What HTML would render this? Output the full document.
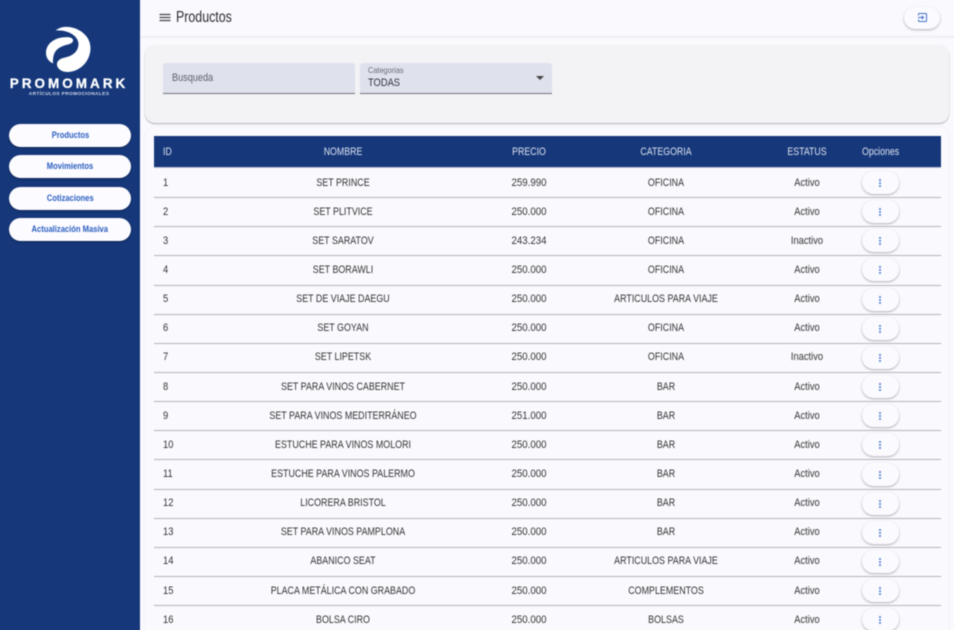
<!DOCTYPE html>
<html lang="es">
<head>
<meta charset="utf-8">
<title>Productos</title>
<style>
html,body{margin:0;padding:0;width:954px;height:630px;overflow:hidden;background:#faf9fe;}
*{box-sizing:border-box;}
body{font-family:"Liberation Sans",sans-serif;color:#333;position:relative;}
#wrap{position:absolute;left:-10px;top:-10px;width:974px;height:650px;overflow:hidden;filter:blur(.4px);background:#faf9fe;}
#in{position:absolute;left:10px;top:10px;width:954px;height:630px;}
.a{position:absolute;white-space:nowrap;}
.side{left:-10px;top:-10px;width:150px;height:650px;background:#16387b;}
.nav{left:9px;width:122px;height:23px;border-radius:12px;background:#fcfbff;color:#2a5fc0;font-weight:bold;font-size:9.500px;line-height:23.500px;text-align:center;box-shadow:0 1px 2px rgba(0,0,0,.35);}
.nav span{display:inline-block;transform:scaleX(.8);}
.topbar{left:140px;top:-10px;width:824px;height:46px;background:#faf9fe;box-shadow:0 1px 2px rgba(0,0,0,.08);}
.panel{left:145px;top:45px;width:804px;height:78px;background:#f3f3f6;border-radius:10px;box-shadow:0 1px 1.500px rgba(0,0,0,.3);}
.card{left:145px;top:127px;width:804px;height:520px;background:#faf9fe;border-radius:10px;box-shadow:0 0 2px rgba(0,0,0,.06);}
.field{top:63px;height:31px;background:#dfe1ec;border-bottom:1px solid #74757d;border-radius:3px 3px 0 0;}
.head{left:154px;top:136px;width:787px;height:32px;background:#16387b;border-bottom:1px solid #b9c0d2;}
.th{top:146px;color:#dde2ee;font-size:11px;line-height:13px;}
.thc{transform:translateX(-50%) scaleX(.8);}
.thl{transform:scaleX(.8);transform-origin:0 50%;}
.td{font-size:11px;line-height:13px;color:#333;margin-top:.6px;}
.i{left:163px;transform:scaleX(.85);transform-origin:0 50%;}
.n{left:343px;transform:translateX(-50%) scaleX(.81);}
.p{left:529px;transform:translateX(-50%) scaleX(.88);}
.k{left:666px;transform:translateX(-50%) scaleX(.81);}
.e{left:807px;transform:translateX(-50%) scaleX(.85);}
.line{left:154px;width:787px;height:1px;background:#b5b5b8;}
.btn{left:862px;width:37px;height:23px;border-radius:11.500px;background:#fbfaff;box-shadow:0 1px 2px rgba(0,0,0,.3);}
.dots{left:879px;width:2px;height:8px;background:radial-gradient(circle at 1px 1px,#5b85d0 1px,transparent 1.1px) 0 0/2px 3px;}
</style>
</head>
<body>
<div id="wrap"><div id="in">
<div class="a side"></div>
<svg class="a" style="left:40px;top:22px" width="58" height="56" viewBox="40 22 58 56">
<path fill="#fff" d="M55.500 30.500C60 27 65 26.500 69 27C81 28.500 90.500 37 90.500 48C90.500 62 79 72 67.500 72C62 72 57.500 69 57 65C56.500 61 60 58.500 65 57.500C73 56 78.500 51 78.500 44C78.500 36 68 29.500 55.500 30.500Z"/>
<path fill="#fff" d="M46 53C46 44 54 38.500 62 37.500C67 36.800 72.500 37 73 40C73.500 43 70 44 66 45C59 47 55 50 53.500 56C53 58.500 52.800 61 53 63.500C49 61.500 46 58 46 53Z"/>
</svg>
<div class="a" style="left:8px;top:76px;width:122px;text-align:center;color:#fff;font-weight:bold;font-size:13.500px;letter-spacing:3px;line-height:15px;-webkit-text-stroke:.25px #fff;">PROMOMARK</div>
<div class="a" style="left:10px;top:91.500px;width:118px;text-align:center;color:#d5dbea;font-weight:bold;font-size:4.800px;letter-spacing:.36px;line-height:6px;">ARTÍCULOS PROMOCIONALES</div>

<div class="a nav" style="top:123.500px"><span>Productos</span></div>
<div class="a nav" style="top:155px"><span>Movimientos</span></div>
<div class="a nav" style="top:186.500px"><span>Cotizaciones</span></div>
<div class="a nav" style="top:218px"><span>Actualización Masiva</span></div>

<div class="a topbar"></div>
<svg class="a" style="left:158px;top:11px" width="14" height="12" viewBox="0 0 14 12"><path d="M1.500 3.500h11M1.500 6.500h11M1.500 9.500h11" stroke="#444" stroke-width="1.200" fill="none"/></svg>
<div class="a" style="left:176px;top:8.500px;font-size:15.500px;line-height:18px;color:#2c2c30;transform:scaleX(.8);transform-origin:0 50%;">Productos</div>
<div class="a" style="left:904px;top:7px;width:36px;height:21.500px;border-radius:11px;background:#fbfaff;box-shadow:0 1px 2px rgba(0,0,0,.3);"></div>
<svg class="a" style="left:918px;top:13px" width="9" height="9" viewBox="0 0 9 9"><path d="M.5 2.500V1.200Q.5.500 1.200.500H7.800Q8.500.500 8.500 1.200V7.800Q8.500 8.500 7.800 8.500H1.200Q.5 8.500.5 7.800V6.500" stroke="#3f6fc6" stroke-width="1" fill="none"/><path d="M0 4.500H5.500M3.800 2.800L5.500 4.500L3.800 6.200" stroke="#3f6fc6" stroke-width="1" fill="none"/></svg>

<div class="a panel"></div>
<div class="a field" style="left:163px;width:192px;"></div>
<div class="a" style="left:172px;top:72px;font-size:11px;line-height:13px;color:#5f6069;transform:scaleX(.83);transform-origin:0 50%;">Busqueda</div>
<div class="a field" style="left:360px;width:192px;"></div>
<div class="a" style="left:368px;top:65.500px;font-size:8px;line-height:9px;color:#6b6c75;transform:scaleX(.92);transform-origin:0 50%;">Categorias</div>
<div class="a" style="left:368px;top:76.500px;font-size:11px;line-height:13px;color:#33343a;transform:scaleX(.85);transform-origin:0 50%;">TODAS</div>
<svg class="a" style="left:536px;top:76px" width="8" height="5" viewBox="0 0 8 5"><path d="M0 0H8L4 4Z" fill="#444"/></svg>

<div class="a card"></div>
<div class="a head"></div>
<div class="a th thl" style="left:163px">ID</div>
<div class="a th thc" style="left:343px">NOMBRE</div>
<div class="a th thc" style="left:529px">PRECIO</div>
<div class="a th thc" style="left:666px">CATEGORIA</div>
<div class="a th thc" style="left:807px">ESTATUS</div>
<div class="a th thl" style="left:862px">Opciones</div>

<!-- rows -->
<div class="a td i" style="top:176px">1</div><div class="a td n" style="top:176px">SET PRINCE</div><div class="a td p" style="top:176px">259.990</div><div class="a td k" style="top:176px">OFICINA</div><div class="a td e" style="top:176px">Activo</div><div class="a btn" style="top:171px"></div><div class="a dots" style="top:179px"></div><div class="a line" style="top:197px"></div>
<div class="a td i" style="top:205px">2</div><div class="a td n" style="top:205px">SET PLITVICE</div><div class="a td p" style="top:205px">250.000</div><div class="a td k" style="top:205px">OFICINA</div><div class="a td e" style="top:205px">Activo</div><div class="a btn" style="top:200px"></div><div class="a dots" style="top:208px"></div><div class="a line" style="top:226px"></div>
<div class="a td i" style="top:234px">3</div><div class="a td n" style="top:234px">SET SARATOV</div><div class="a td p" style="top:234px">243.234</div><div class="a td k" style="top:234px">OFICINA</div><div class="a td e" style="top:234px">Inactivo</div><div class="a btn" style="top:229px"></div><div class="a dots" style="top:237px"></div><div class="a line" style="top:255px"></div>
<div class="a td i" style="top:263px">4</div><div class="a td n" style="top:263px">SET BORAWLI</div><div class="a td p" style="top:263px">250.000</div><div class="a td k" style="top:263px">OFICINA</div><div class="a td e" style="top:263px">Activo</div><div class="a btn" style="top:258px"></div><div class="a dots" style="top:266px"></div><div class="a line" style="top:284.500px"></div>
<div class="a td i" style="top:292px">5</div><div class="a td n" style="top:292px">SET DE VIAJE DAEGU</div><div class="a td p" style="top:292px">250.000</div><div class="a td k" style="top:292px">ARTICULOS PARA VIAJE</div><div class="a td e" style="top:292px">Activo</div><div class="a btn" style="top:288px"></div><div class="a dots" style="top:295.500px"></div><div class="a line" style="top:314px"></div>
<div class="a td i" style="top:321.500px">6</div><div class="a td n" style="top:321.500px">SET GOYAN</div><div class="a td p" style="top:321.500px">250.000</div><div class="a td k" style="top:321.500px">OFICINA</div><div class="a td e" style="top:321.500px">Activo</div><div class="a btn" style="top:317px"></div><div class="a dots" style="top:325px"></div><div class="a line" style="top:343px"></div>
<div class="a td i" style="top:350.500px">7</div><div class="a td n" style="top:350.500px">SET LIPETSK</div><div class="a td p" style="top:350.500px">250.000</div><div class="a td k" style="top:350.500px">OFICINA</div><div class="a td e" style="top:350.500px">Inactivo</div><div class="a btn" style="top:346px"></div><div class="a dots" style="top:354px"></div><div class="a line" style="top:372px"></div>
<div class="a td i" style="top:380px">8</div><div class="a td n" style="top:380px">SET PARA VINOS CABERNET</div><div class="a td p" style="top:380px">250.000</div><div class="a td k" style="top:380px">BAR</div><div class="a td e" style="top:380px">Activo</div><div class="a btn" style="top:375px"></div><div class="a dots" style="top:383px"></div><div class="a line" style="top:401px"></div>
<div class="a td i" style="top:409px">9</div><div class="a td n" style="top:409px">SET PARA VINOS MEDITERRÁNEO</div><div class="a td p" style="top:409px">251.000</div><div class="a td k" style="top:409px">BAR</div><div class="a td e" style="top:409px">Activo</div><div class="a btn" style="top:404px"></div><div class="a dots" style="top:412px"></div><div class="a line" style="top:430px"></div>
<div class="a td i" style="top:438px">10</div><div class="a td n" style="top:438px">ESTUCHE PARA VINOS MOLORI</div><div class="a td p" style="top:438px">250.000</div><div class="a td k" style="top:438px">BAR</div><div class="a td e" style="top:438px">Activo</div><div class="a btn" style="top:433px"></div><div class="a dots" style="top:441px"></div><div class="a line" style="top:459px"></div>
<div class="a td i" style="top:467px">11</div><div class="a td n" style="top:467px">ESTUCHE PARA VINOS PALERMO</div><div class="a td p" style="top:467px">250.000</div><div class="a td k" style="top:467px">BAR</div><div class="a td e" style="top:467px">Activo</div><div class="a btn" style="top:462.500px"></div><div class="a dots" style="top:470.500px"></div><div class="a line" style="top:488.500px"></div>
<div class="a td i" style="top:496.500px">12</div><div class="a td n" style="top:496.500px">LICORERA BRISTOL</div><div class="a td p" style="top:496.500px">250.000</div><div class="a td k" style="top:496.500px">BAR</div><div class="a td e" style="top:496.500px">Activo</div><div class="a btn" style="top:492px"></div><div class="a dots" style="top:500px"></div><div class="a line" style="top:518px"></div>
<div class="a td i" style="top:525.500px">13</div><div class="a td n" style="top:525.500px">SET PARA VINOS PAMPLONA</div><div class="a td p" style="top:525.500px">250.000</div><div class="a td k" style="top:525.500px">BAR</div><div class="a td e" style="top:525.500px">Activo</div><div class="a btn" style="top:521px"></div><div class="a dots" style="top:529px"></div><div class="a line" style="top:547px"></div>
<div class="a td i" style="top:554.500px">14</div><div class="a td n" style="top:554.500px">ABANICO SEAT</div><div class="a td p" style="top:554.500px">250.000</div><div class="a td k" style="top:554.500px">ARTICULOS PARA VIAJE</div><div class="a td e" style="top:554.500px">Activo</div><div class="a btn" style="top:550px"></div><div class="a dots" style="top:558px"></div><div class="a line" style="top:576px"></div>
<div class="a td i" style="top:584px">15</div><div class="a td n" style="top:584px">PLACA METÁLICA CON GRABADO</div><div class="a td p" style="top:584px">250.000</div><div class="a td k" style="top:584px">COMPLEMENTOS</div><div class="a td e" style="top:584px">Activo</div><div class="a btn" style="top:579px"></div><div class="a dots" style="top:587px"></div><div class="a line" style="top:605px"></div>
<div class="a td i" style="top:613px">16</div><div class="a td n" style="top:613px">BOLSA CIRO</div><div class="a td p" style="top:613px">250.000</div><div class="a td k" style="top:613px">BOLSAS</div><div class="a td e" style="top:613px">Activo</div><div class="a btn" style="top:608px"></div><div class="a dots" style="top:616px"></div>
</div></div>
</body>
</html>
